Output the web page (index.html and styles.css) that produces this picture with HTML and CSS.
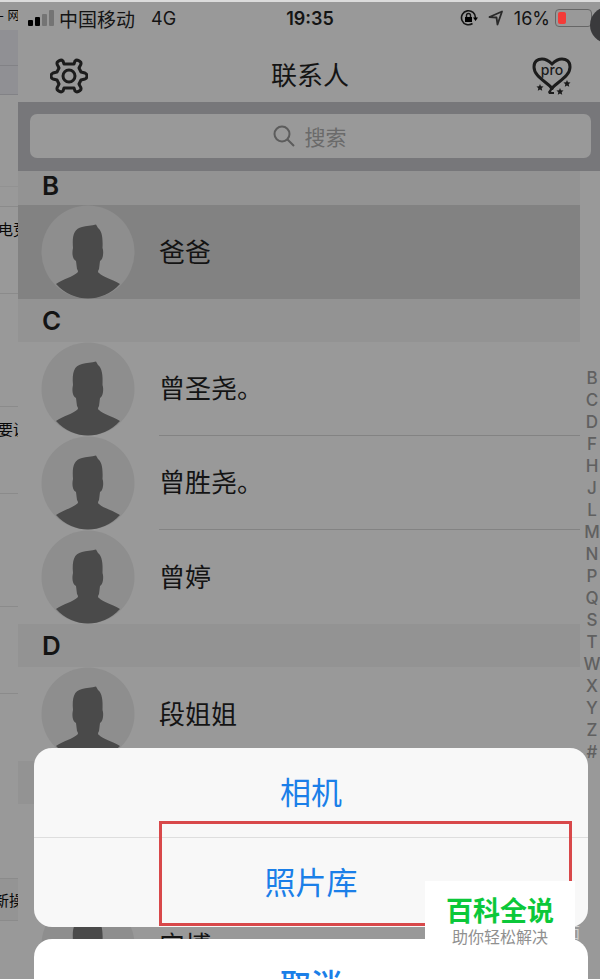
FILE: index.html
```html
<!DOCTYPE html>
<html lang="zh-CN">
<head>
<meta charset="utf-8">
<meta name="viewport" content="width=device-width, initial-scale=1">
<title>联系人</title>
<link rel="stylesheet" href="styles.css">
</head>
<body>
<svg class="defs" aria-hidden="true">
  <symbol id="person" viewBox="0 0 94 94">
    <circle cx="47" cy="47" r="46.500" fill="#8e8e8e"/>
    <path fill="#4a4a4a" d="M32 43C31 30 33 24 41 22C45 20.500 51 21 55 19.500L57 23C61 26 62 33 61.500 43C63 47 62 55 59 56L58 64Q56 67 58 68C62 72 71 74 79 79C70 89 58 93.500 47 93.500C36 93.500 24 89 15 79C22 74 32 72 37 67Q37 65 36 64L35 56C31 54 31 47 32 43Z"/>
  </symbol>
</svg>
<div class="stage">
  <aside class="page">
    <div class="tab">- 网</div>
    <div class="bar bar-a"></div>
    <div class="bar bar-b"></div>
    <div class="cell blank"></div>
    <div class="cell gap"></div>
    <div class="cell post">电竞</div>
    <div class="cell space"></div>
    <div class="cell post">要说</div>
    <div class="cell space"></div>
    <div class="cell post"></div>
    <div class="cell tall"></div>
    <div class="cell foot">新操</div>
  </aside>
  <main class="phone">
    <div class="status">
      <div class="carrier">
        <svg width="26" height="16" viewBox="0 0 26 16" aria-hidden="true"><rect y="10" width="5" height="6" rx="1"/><rect x="7" y="7" width="5" height="9" rx="1"/><g fill="#747474"><rect x="14" y="4" width="5" height="12" rx="1"/><rect x="21" y="0" width="5" height="16" rx="1"/></g></svg>
        <span>中国移动</span><span class="net">4G</span>
      </div>
      <time>19:35</time>
      <div class="power">
        <svg width="18" height="18" viewBox="0 0 18 18" aria-hidden="true"><path d="M12.500 14.500A7 7 0 1 1 15.500 9" fill="none" stroke="#151515" stroke-width="1.600"/><path d="M13 8.500h5l-2.500 3.500zM5 8h7v5H5z"/><path d="M6.500 8V6.500a2 2 0 0 1 4 0V8" fill="none" stroke="#151515" stroke-width="1.400"/></svg>
        <svg class="arrow" width="16" height="16" viewBox="0 0 16 16" aria-hidden="true"><path d="M1.500 7L14 1.500 9.500 14.500 8.500 7.500Z" fill="none" stroke="#2a2a2a" stroke-width="1.800" stroke-linejoin="round"/></svg>
        <span>16%</span>
        <span class="battery"><i></i></span>
      </div>
      <div class="knob"></div>
    </div>
    <header class="nav">
      <button aria-label="设置">
        <svg width="38" height="36" viewBox="-19 -18 38 36"><g fill="none" stroke="#1c1c1c" stroke-width="3" stroke-linejoin="round"><circle r="6"/><path d="M-5-12L-6-15Q-8-17-11-14.500Q-13-13-11-10L-10-8L-12-4L-16-3Q-18-2-18 0Q-18 2-16 3L-12 4L-10 8L-11 10Q-13 13-11 14.500Q-8 17-6 15L-5 12H5L6 15Q8 17 11 14.500Q13 13 11 10L10 8L12 4L16 3Q18 2 18 0Q18-2 16-3L12-4L10-8L11-10Q13-13 11-14.500Q8-17 6-15L5-12Z"/></g></svg>
      </button>
      <h1>联系人</h1>
      <button aria-label="pro">
        <svg width="40" height="42" viewBox="0 0 40 42"><path d="M20 33C13 26 2 21 2 12C2 6 6 4 10 4C15 4 18 7 20 9C22 7 25 4 30 4C34 4 38 6 38 12C38 21 27 26 20 33Z" fill="none" stroke="#1c1c1c" stroke-width="3"/><text x="20" y="20" text-anchor="middle">pro</text><g fill="#1c1c1c"><path id="star" d="M8 29l1 2.200 2.500.3-1.800 1.700.5 2.500L8 34.500l-2.200 1.200.5-2.500-1.800-1.700 2.500-.3z"/><use href="#star" x="27" y="-4"/><use href="#star" x="20" y="4"/><path d="M17 31h6l-2 4h-1l-1 2h3v2h-5l-1-2 2-3z"/></g></svg>
      </button>
    </header>
    <label class="search">
      <span class="field">
        <svg width="22" height="22" viewBox="0 0 22 22" aria-hidden="true"><g fill="none" stroke="#5c5c5c" stroke-width="2"><circle cx="9" cy="9" r="7.500"/><path d="M14.500 14.500L21 21"/></g></svg>
        <input type="text" placeholder="搜索" aria-label="搜索">
      </span>
    </label>
    <div class="body">
      <div class="contacts">
        <section><h2 class="first">B</h2><ul><li class="picked"><svg><use href="#person"/></svg><span>爸爸</span></li></ul></section>
        <section><h2>C</h2><ul>
          <li><svg><use href="#person"/></svg><span>曾圣尧。</span></li>
          <li><svg><use href="#person"/></svg><span>曾胜尧。</span></li>
          <li><svg><use href="#person"/></svg><span>曾婷</span></li></ul></section>
        <section><h2>D</h2><ul><li><svg><use href="#person"/></svg><span>段姐姐</span></li></ul></section>
        <section><h2></h2><ul>
          <li></li>
          <li><svg><use href="#person"/></svg><span>宁博</span></li></ul></section>
      </div>
      <nav class="index">
        <a href="#b">B</a><a href="#c">C</a><a href="#d">D</a><a href="#f">F</a><a href="#h">H</a><a href="#j">J</a><a href="#l">L</a><a href="#m">M</a><a href="#n">N</a><a href="#p">P</a><a href="#q">Q</a><a href="#s">S</a><a href="#t">T</a><a href="#w">W</a><a href="#x">X</a><a href="#y">Y</a><a href="#z">Z</a><a href="#other">#</a>
      </nav>
    </div>
    <div class="sheet">
      <div class="options"><button>相机</button><button>照片库</button></div>
      <button class="cancel">取消</button>
      <div class="marker"></div>
      <div class="credit">面</div>
      <div class="stamp"><strong>百科全说</strong><span>助你轻松解决</span></div>
    </div>
  </main>
</div>
</body>
</html>
```
FILE: styles.css
```css
* { box-sizing: border-box; }
body {
  margin: 0;
  background: #999;
  color: #141414;
  font-family: Inter, "Noto Sans CJK SC", sans-serif;
}
button { border: 0; padding: 0; background: none; font: inherit; color: inherit; }
h1, h2, ul { margin: 0; padding: 0; font-weight: 400; }
svg { display: block; flex: none; }
.defs { position: absolute; width: 0; height: 0; }
.stage {
  display: grid;
  grid-template-columns: 18px 1fr;
  height: 100vh;
  overflow: hidden;
  border-top: 2px solid #dcdcdc;
}

/* Underlying page, visible at the left edge */
.page { overflow: hidden; font-size: 15px; color: #080808; }
.page div { display: flex; align-items: center; white-space: nowrap; }
.page .tab { height: 28px; font-size: 12px; padding-bottom: 4px; justify-content: center; }
.bar { background: #909094; border-bottom: 1px solid #828286; }
.bar-a { height: 36px; }
.bar-b { height: 29px; }
.cell { border-bottom: 1px solid #8b8b8b; }
.blank { height: 92px; border-color: #929292; }
.gap { height: 20px; }
.page .post { height: 87px; align-items: flex-start; padding-top: 11px; margin-left: -2px; }
.space { height: 113px; }
.tall { height: 185px; }
.page .foot { height: 42px; justify-content: center; background: #949494; }

.phone { position: relative; min-width: 0; overflow: hidden; }
.status {
  position: relative;
  display: grid;
  grid-template-columns: 1fr auto 1fr;
  align-items: center;
  height: 32px;
  padding: 0 8px 0 10px;
  font-size: 18px;
}
.carrier, .power { display: flex; align-items: center; }
.carrier { gap: 5px; font-size: 19px; }
.net { margin-left: 11px; font-size: 18px; }
.status time { font-weight: 600; }
.power { justify-content: flex-end; gap: 5px; }
.arrow { margin: 0 5px; }
.battery { width: 37px; height: 18px; border: 1px solid #666; border-radius: 4px; padding: 2px; }
.battery i { display: block; width: 8px; height: 12px; border-radius: 2px; background: #f43b38; }
.knob {
  position: absolute;
  top: 5px;
  right: -26px;
  width: 36px;
  height: 36px;
  border-radius: 50%;
  background: #3a3a3c;
}
.nav {
  display: flex;
  align-items: center;
  justify-content: space-between;
  height: 68px;
  padding: 16px 28px 0 32px;
}
.nav h1 { font-size: 26px; line-height: 36px; }
.nav text { font: 500 14px Inter, sans-serif; fill: #1c1c1c; }
.search { display: block; padding: 12px 9px 13px 12px; background: #77777a; }
.field {
  display: flex;
  align-items: center;
  justify-content: center;
  gap: 10px;
  height: 44px;
  border-radius: 7px;
  background: #999;
}
.field input {
  width: 44px;
  border: 0;
  padding: 0;
  background: none;
  font: 21px "Noto Sans CJK SC", sans-serif;
  outline: none;
}
.field input::placeholder { color: #6a6a6a; opacity: 1; }

.body { display: grid; grid-template-columns: 1fr 20px; }
.contacts h2 {
  display: flex;
  align-items: center;
  height: 43px;
  padding-left: 24px;
  background: #939393;
  font-size: 26px;
  font-weight: 600;
}
.contacts .first { height: 34px; padding-bottom: 6px; }
.contacts li {
  display: grid;
  grid-template-columns: 94px 1fr;
  gap: 24px;
  height: 94px;
  padding-left: 23px;
  font-size: 26px;
}
.contacts li svg { width: 94px; height: 94px; }
.contacts li span { display: flex; align-items: center; padding-bottom: 4px; }
.contacts li:not(:last-child) span { border-bottom: 1px solid #838383; }
.picked { background: #828282; }
.index {
  display: flex;
  flex-direction: column;
  align-items: center;
  padding: 196px 0 0 4px;
}
.index a {
  color: #606060;
  font-size: 17px;
  font-weight: 500;
  line-height: 22px;
  text-decoration: none;
}

.sheet { position: absolute; left: 16px; right: 12px; bottom: -50px; }
.options { overflow: hidden; border-radius: 18px; background: #f8f8f8; }
.options button, .cancel {
  display: block;
  width: 100%;
  height: 89px;
  padding-bottom: 4px;
  color: #1b7fe8;
  font-size: 31px;
}
.options button + button { height: 90px; border-top: 1px solid #dedede; }
.sheet .cancel {
  height: 90px;
  margin-top: 12px;
  border-radius: 18px;
  background: #fff;
  font-weight: 500;
}
.marker {
  position: absolute;
  top: 73px;
  left: 125px;
  right: 16px;
  height: 105px;
  border: 3px solid #d8484a;
}
.credit {
  position: absolute;
  top: 174px;
  right: 8px;
  color: #d0d0d0;
  font-size: 15px;
  line-height: 22px;
}
.stamp {
  position: absolute;
  top: 133px;
  right: 13px;
  display: flex;
  flex-direction: column;
  align-items: center;
  width: 150px;
  height: 74px;
  padding-top: 16px;
  background: #fff;
}
.stamp strong { color: #0bc83a; font-size: 27px; font-weight: 700; line-height: 30px; }
.stamp span { color: #909090; font-size: 16px; line-height: 20px; }
```
